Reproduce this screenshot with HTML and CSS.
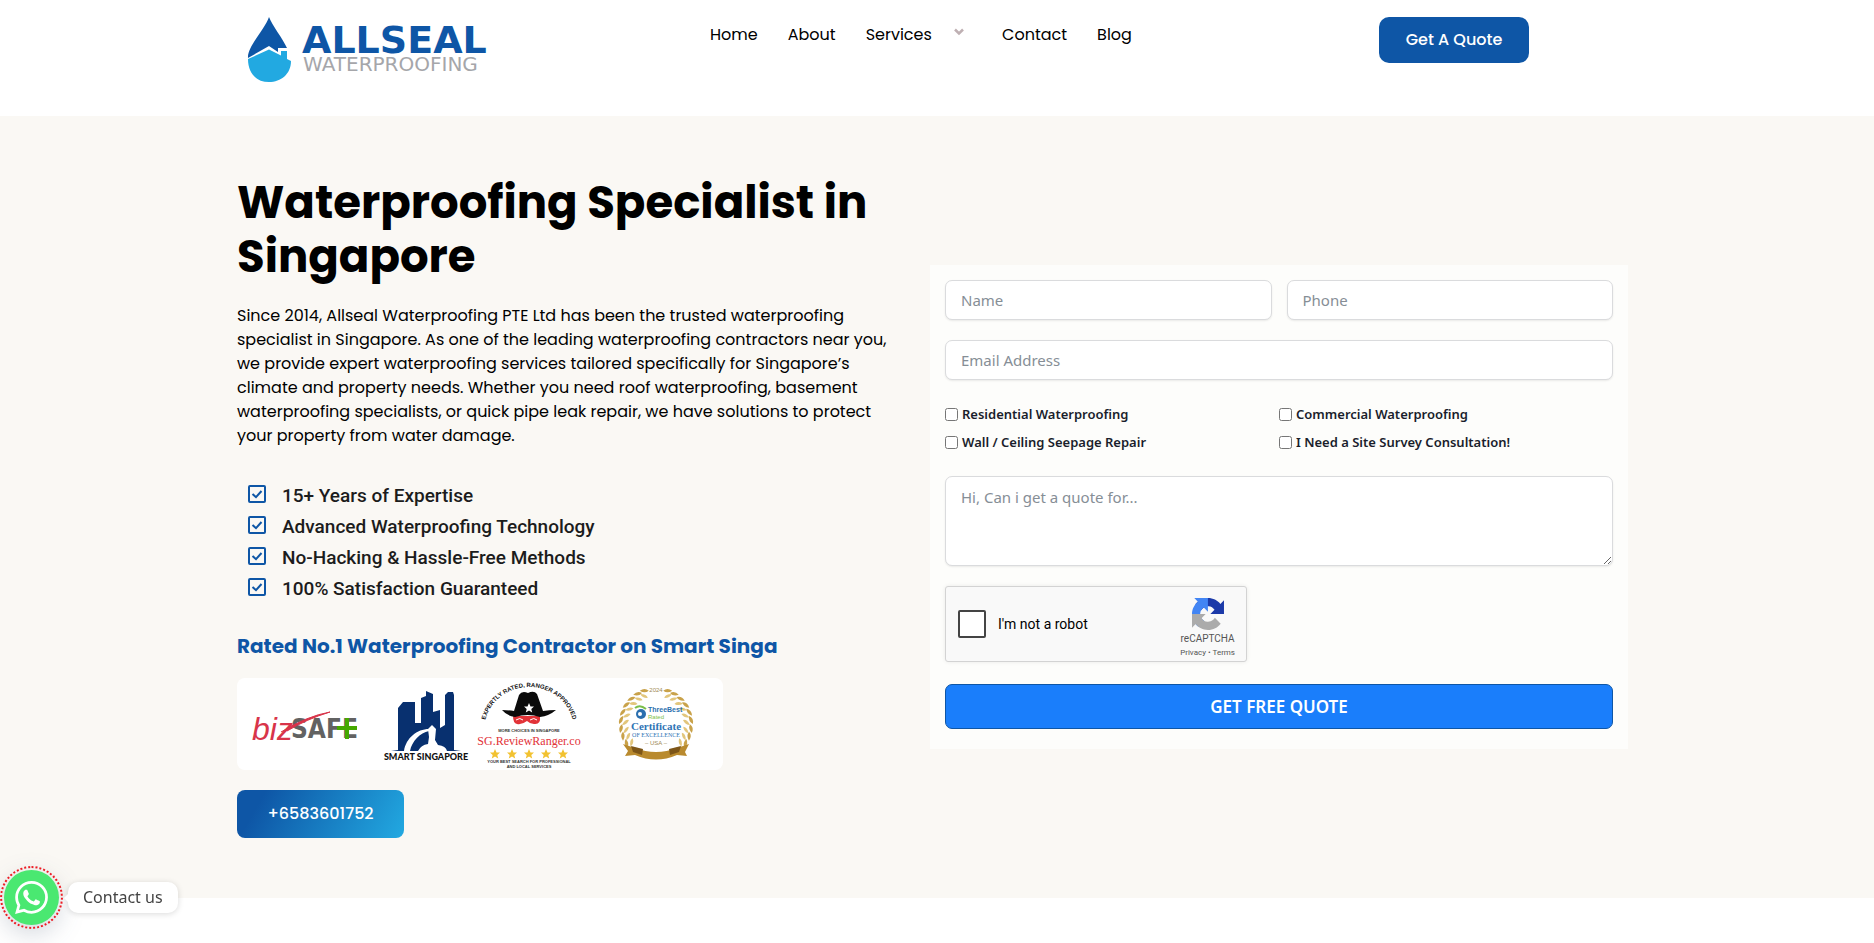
FILE: index.html
```html
<!DOCTYPE html>
<html lang="en">
<head>
    <meta charset="UTF-8">
    <meta name="viewport" content="width=device-width, initial-scale=1">
    <title>Allseal Waterproofing</title>
    <link rel="stylesheet" href="styles.css">
</head>
<body>
    <!-- header -->
    <header class="header">
        <div class="container header-inner">
            <a href="#" class="logo" aria-label="Allseal Waterproofing">
                <svg width="260" height="66" viewBox="0 0 260 66">
                    <path fill="#0e56a6" d="M22 0C25 8 36 22 40 31H31V35L22 29L1 41C0 30 18 12 22 0Z"/>
                    <path fill="#22a9e1" d="M1 42L22 32.500L34 38.500V34H40V42L44 44C44 57 34 65 22 65S1 57 1 42Z"/>
                    <text class="logo-name" x="55" y="36">ALLSEAL</text>
                    <text class="logo-sub" x="56" y="54">WATERPROOFING</text>
                </svg>
            </a>
            <nav class="nav">
                <a href="#">Home</a>
                <a href="#">About</a>
                <a href="#" class="has-menu">Services
                    <svg width="10" height="8" viewBox="0 0 10 8"><path d="M1 1.500L5 5.500L9 1.500" fill="none" stroke="#bfb0b3" stroke-width="2.500"/></svg>
                </a>
                <a href="#">Contact</a>
                <a href="#">Blog</a>
            </nav>
            <div>
                <a href="#" class="btn btn-quote">Get A Quote</a>
            </div>
        </div>
    </header>

    <!-- hero -->
    <section class="hero">
        <div class="container hero-inner">
            <div class="intro">
                <h1>Waterproofing Specialist in Singapore</h1>
                <p>Since 2014, Allseal Waterproofing PTE Ltd has been the trusted waterproofing specialist in Singapore. As one of the leading waterproofing contractors near you, we provide expert waterproofing services tailored specifically for Singapore’s climate and property needs. Whether you need roof waterproofing, basement waterproofing specialists, or quick pipe leak repair, we have solutions to protect your property from water damage.</p>
                <ul class="points">
                    <li><svg class="tick" viewBox="0 0 18 18"><rect x="1" y="1" width="16" height="16" rx="1"/><path d="M4.500 9L8 12.200L13.500 6"/></svg>15+ Years of Expertise</li>
                    <li><svg class="tick" viewBox="0 0 18 18"><rect x="1" y="1" width="16" height="16" rx="1"/><path d="M4.500 9L8 12.200L13.500 6"/></svg>Advanced Waterproofing Technology</li>
                    <li><svg class="tick" viewBox="0 0 18 18"><rect x="1" y="1" width="16" height="16" rx="1"/><path d="M4.500 9L8 12.200L13.500 6"/></svg>No-Hacking &amp; Hassle-Free Methods</li>
                    <li><svg class="tick" viewBox="0 0 18 18"><rect x="1" y="1" width="16" height="16" rx="1"/><path d="M4.500 9L8 12.200L13.500 6"/></svg>100% Satisfaction Guaranteed</li>
                </ul>
                <h2>Rated No.1 Waterproofing Contractor on Smart Singa</h2>
                <svg class="awards" width="486" height="92" viewBox="0 0 486 92">
                    <defs>
                        <path id="arc" d="M247 52A45 43 0 0 1 337 52"/>
                        <path id="star" d="M0 -5L1.500 -1.600L5 -1.400L2.300 .9L3.200 4.500L0 2.500L-3.200 4.500L-2.300 .9L-5 -1.400L-1.500 -1.600Z"/>
                        <g id="leaf"><path d="M-37 0Q-38 -6 -33 -8Q-32 -3 -37 0Z" fill="#c9a24a"/><path d="M-34 1Q-31 -5 -27 -4Q-29 1 -34 1Z" fill="#e2c67c"/></g>
                        <g id="branch">
                            <use href="#leaf" transform="rotate(-40)"/><use href="#leaf" transform="rotate(-27)"/>
                            <use href="#leaf" transform="rotate(-14)"/><use href="#leaf"/>
                            <use href="#leaf" transform="rotate(13)"/><use href="#leaf" transform="rotate(26)"/>
                            <use href="#leaf" transform="rotate(39)"/><use href="#leaf" transform="rotate(52)"/>
                            <use href="#leaf" transform="rotate(64)"/>
                        </g>
                    </defs>
                    <!-- bizSAFE -->
                    <text class="safe" x="54" y="60">SAFE</text>
                    <text class="biz" x="15" y="62">biz</text>
                    <path d="M44 54Q70 38 93 34Q70 41 50 53" fill="#d8344a" stroke="#d8344a" stroke-width="1"/>
                    <path d="M110 40V61M100 50H120" stroke="#45a800" stroke-width="4"/>
                    <!-- Smart Singapore -->
                    <path fill="#08306f" d="M161 72V30L166 24H178V45H184V20L189 18V13L196 16V34L203 32V50L208 47V17L211 14H216L217 17V72L224 73H154Z"/>
                    <path fill="#fff" d="M167 73C169 60 180 51 192 51V53C183 55 175 63 173 73ZM181 73Q184 67 191 66L192 59L191 51L195 47L199 51L198 62L201 67Q209 68 210 73Z"/>
                    <text class="smart" x="189" y="82">SMART SINGAPORE</text>
                    <!-- Review Ranger -->
                    <text class="arc"><textPath href="#arc" startOffset="50%">EXPERTLY RATED, RANGER APPROVED</textPath></text>
                    <path fill="#e23338" d="M276 38H303Q304 47 297 46Q293 46 290 43Q285 47 280 46Q276 45 276 38Z"/>
                    <path d="M279 42Q283 39 286 42M293 42Q297 39 300 42" fill="none" stroke="#fff" stroke-width="1"/>
                    <path fill="#0b0b0b" d="M265 32Q272 32 277 33L282 17Q285 12 291 15Q297 12 300 16L306 33Q312 32 319 32Q312 38 303 39Q291 35 278 39Q270 38 265 32Z"/>
                    <use href="#star" transform="translate(292 30)" fill="#fff"/>
                    <text class="tiny" x="292" y="54">MORE CHOICES IN SINGAPORE</text>
                    <text class="ranger" x="292" y="67">SG.ReviewRanger.co</text>
                    <g fill="#f2c230">
                        <use href="#star" x="258" y="76"/><use href="#star" x="275" y="76"/><use href="#star" x="292" y="76"/><use href="#star" x="309" y="76"/><use href="#star" x="326" y="76"/>
                    </g>
                    <text class="tiny" x="292" y="85">YOUR BEST SEARCH FOR PROFESSIONAL</text>
                    <text class="tiny" x="292" y="90">AND LOCAL SERVICES</text>
                    <!-- certificate -->
                    <use href="#branch" transform="translate(419 46)"/>
                    <use href="#branch" transform="translate(419 46) scale(-1 1)"/>
                    <path fill="#b98a2e" d="M386 66L398 70Q419 78 440 70L452 66L448 74L450 78L440 77Q419 86 398 77L388 78L391 73Z"/>
                    <path fill="#7d5618" d="M394 68L406 71L405 77L396 74ZM444 68L432 71L433 77L442 74Z"/>
                    <text class="year" x="419" y="14">2024</text>
                    <circle cx="404" cy="36" r="5" fill="#2b6fae"/><circle cx="403" cy="36" r="2" fill="#fff"/>
                    <path d="M398 30Q403 26 409 31" fill="none" stroke="#7bbf4a" stroke-width="2"/>
                    <text class="best" x="411" y="34">ThreeBest</text>
                    <text class="rated" x="411" y="41">Rated</text>
                    <text class="cert" x="419" y="52">Certificate</text>
                    <text class="excel" x="419" y="59">OF EXCELLENCE</text>
                    <text class="year" x="419" y="67">– USA –</text>
                </svg>
                <a href="tel:+6583601752" class="btn btn-phone">+6583601752</a>
            </div>

            <form class="quote-form">
                <div class="row">
                    <input class="field" type="text" aria-label="Name" placeholder="Name">
                    <input class="field" type="tel" aria-label="Phone" placeholder="Phone">
                </div>
                <input class="field" type="email" aria-label="Email Address" placeholder="Email Address">
                <div class="checks">
                    <label><input type="checkbox">Residential Waterproofing</label>
                    <label><input type="checkbox">Commercial Waterproofing</label>
                    <label><input type="checkbox">Wall / Ceiling Seepage Repair</label>
                    <label><input type="checkbox">I Need a Site Survey Consultation!</label>
                </div>
                <textarea class="field message" aria-label="Message" placeholder="Hi, Can i get a quote for..."></textarea>
                <div class="captcha">
                    <label class="robot"><input type="checkbox">I'm not a robot</label>
                    <div class="captcha-brand">
                        <svg width="32" height="32" viewBox="0 0 64 64">
                            <path fill="#1c3aa9" d="M64 31.955l-.033-1.370V4.687l-7.160 7.160C50.948 4.674 42.033.093 32.050.093c-10.400 0-19.622 4.960-25.458 12.640l11.736 11.860a15.550 15.550 0 0 1 4.754-5.334c2.050-1.600 4.952-2.906 8.968-2.906.485 0 .860.057 1.135.163 4.976.393 9.288 3.140 11.828 7.124l-8.307 8.307L64 31.953"/>
                            <path fill="#4285f4" d="M31.862.094l-1.370.033H4.594l7.160 7.160C4.580 13.147 0 22.060 0 32.046c0 10.400 4.960 19.622 12.640 25.458L24.500 45.768a15.550 15.550 0 0 1-5.334-4.754c-1.600-2.050-2.906-4.952-2.906-8.968 0-.485.057-.860.163-1.135.393-4.976 3.140-9.288 7.124-11.828l8.307 8.307L31.860.095"/>
                            <path fill="#ababab" d="M.001 32.045l.033 1.370v25.898l7.160-7.160c5.860 7.173 14.774 11.754 24.760 11.754 10.400 0 19.622-4.960 25.458-12.640l-11.736-11.860a15.550 15.550 0 0 1-4.754 5.334c-2.050 1.600-4.952 2.906-8.968 2.906-.485 0-.860-.057-1.135-.163-4.976-.393-9.288-3.140-11.828-7.124l8.307-8.307c-10.522.040-22.400.066-27.295-.005"/>
                        </svg>
                        <span class="captcha-name">reCAPTCHA</span>
                        <span class="captcha-links"><a href="#">Privacy</a> • <a href="#">Terms</a></span>
                    </div>
                </div>
                <button class="submit" type="submit">GET FREE QUOTE</button>
            </form>
        </div>
    </section>

    <!-- floating chat -->
    <div class="chat">
        <a href="#" class="chat-btn" aria-label="WhatsApp">
            <svg width="33" height="33" viewBox="0 0 24 24"><path fill="#fff" d="M17.472 14.382c-.297-.149-1.758-.867-2.030-.967-.273-.099-.471-.148-.670.150-.197.297-.767.966-.940 1.164-.173.199-.347.223-.644.075-.297-.150-1.255-.463-2.390-1.475-.883-.788-1.480-1.761-1.653-2.059-.173-.297-.018-.458.130-.606.134-.133.298-.347.446-.520.149-.174.198-.298.298-.497.099-.198.050-.371-.025-.520-.075-.149-.669-1.612-.916-2.207-.242-.579-.487-.500-.669-.510-.173-.008-.371-.010-.570-.010-.198 0-.520.074-.792.372-.272.297-1.040 1.016-1.040 2.479 0 1.462 1.065 2.875 1.213 3.074.149.198 2.096 3.200 5.077 4.487.709.306 1.262.489 1.694.625.712.227 1.360.195 1.871.118.571-.085 1.758-.719 2.006-1.413.248-.694.248-1.289.173-1.413-.074-.124-.272-.198-.570-.347m-5.421 7.403h-.004a9.870 9.870 0 0 1-5.031-1.378l-.361-.214-3.741.982.998-3.648-.235-.374a9.860 9.860 0 0 1-1.510-5.260c.001-5.450 4.436-9.884 9.888-9.884 2.640 0 5.122 1.030 6.988 2.898a9.825 9.825 0 0 1 2.893 6.994c-.003 5.450-4.437 9.884-9.885 9.884m8.413-18.297A11.815 11.815 0 0 0 12.050 0C5.495 0 .160 5.335.157 11.892c0 2.096.547 4.142 1.588 5.945L.057 24l6.305-1.654a11.882 11.882 0 0 0 5.683 1.448h.005c6.554 0 11.890-5.335 11.893-11.893a11.821 11.821 0 0 0-3.480-8.413Z"/></svg>
        </a>
        <span class="chat-label">Contact us</span>
    </div>
</body>
</html>
```
FILE: styles.css
```css
*{box-sizing:border-box;}
body{margin:0;background:#fff;color:#000;font-family:Poppins, Inter, sans-serif;font-size:16px;line-height:24px;}
a{text-decoration:none;color:inherit;}
h1, h2, p, ul{margin:0;padding:0;}
.container{max-width:1400px;margin:0 auto;}

/* header */
.header{background:#fff;}
.header-inner{display:grid;grid-template-columns:473fr 669fr 258fr;min-height:116px;padding-top:17px;align-items:start;}
.logo{display:block;padding-left:10px;height:66px;}
.logo-name{font:bold 38px "DejaVu Sans", sans-serif;fill:#0e56a6;}
.logo-sub{font:20px "DejaVu Sans", sans-serif;fill:#a5a6aa;}
.nav{display:flex;gap:30px;padding-top:6px;}
.has-menu svg{margin:0 8px 4px 18px;}
.btn{display:inline-block;border-radius:8px;color:#fff;font-weight:500;text-align:center;}
.btn-quote{width:150px;line-height:46px;background:#0e56a6;border-radius:10px;}

/* hero */
.hero{background:#faf8f4;padding:60px 0;}
.hero-inner{display:grid;grid-template-columns:658fr 698fr;gap:35px;align-items:center;padding-right:9px;}
h1{font-size:45px;line-height:54px;font-weight:700;margin-bottom:20px;}
.points{list-style:none;margin:32px 0 30px;padding-left:11px;font:500 19px/31px Roboto, sans-serif;color:#1c1c1c;}
.points li{display:flex;align-items:center;gap:16px;}
.tick{width:18px;height:18px;margin-bottom:4px;fill:none;stroke:#0e56a6;stroke-width:2;}
h2{font-size:20px;line-height:24px;font-weight:700;color:#0e56a6;}
.awards{display:block;max-width:100%;margin:20px 0;background:#fff;border-radius:8px;}
.btn-phone{width:167px;line-height:48px;background:linear-gradient(120deg, #0e56a6 15%, #22a9e1);}

/* text in the award badges */
.safe{font:bold 26px "DejaVu Sans Condensed", sans-serif;fill:#626262;}
.biz{font:italic 32px "Liberation Sans", sans-serif;fill:#d8344a;}
.smart, .arc, .ranger, .tiny, .year, .cert, .excel{text-anchor:middle;}
.smart{font:900 9px Lato, sans-serif;fill:#111;}
.arc{font:bold 6px "Liberation Sans", sans-serif;fill:#111;}
.ranger{font:12px "Liberation Serif", serif;fill:#e23338;}
.tiny{font:bold 4px "Liberation Sans", sans-serif;fill:#333;}
.year{font:6px "Liberation Sans", sans-serif;fill:#a08a55;}
.best{font:bold 7px "Liberation Sans", sans-serif;fill:#2b6fae;}
.rated{font:6px "Liberation Sans", sans-serif;fill:#7bbf4a;}
.cert{font:bold 11px "Liberation Serif", serif;fill:#2f74b5;}
.excel{font:6px "Liberation Serif", serif;fill:#2f74b5;}

/* quote form */
.quote-form{display:flex;flex-direction:column;gap:20px;padding:15px 15px 20px;background:#fdfdfb;font-family:"Segoe UI", "Noto Sans", sans-serif;}
.row{display:grid;grid-template-columns:1fr 1fr;gap:15px;}
.field{display:block;width:100%;height:40px;padding:0 15px;border:1px solid #dadbdd;border-radius:7px;background:#fff;box-shadow:0 1px 2px rgba(0,0,0,.08);font:15px/24px "Segoe UI", "Noto Sans", sans-serif;}
.field::placeholder{color:#868e96;opacity:1;}
.message{height:90px;padding-top:8px;resize:vertical;}
.checks{display:grid;grid-template-columns:1fr 1fr;row-gap:4px;padding:2px 0;font-size:13px;line-height:24px;font-weight:600;color:#1a1e2c;}
.checks label{display:flex;align-items:center;}
.checks input{width:13px;height:13px;margin:0 4px 0 0;}
.captcha{display:flex;justify-content:space-between;width:302px;height:76px;padding:0 11px 0 12px;border:1px solid #d3d3d3;border-radius:3px;background:#f9f9f9;box-shadow:0 0 4px rgba(0,0,0,.08);font-family:Roboto, sans-serif;}
.robot{display:flex;align-items:center;gap:12px;font-size:14px;}
.robot input{appearance:none;width:28px;height:28px;margin:0;border:2px solid #444;border-radius:2px;background:#fff;}
.captcha-brand{display:flex;flex-direction:column;align-items:center;padding-top:11px;color:#555;}
.captcha-name{font-size:10px;line-height:18px;}
.captcha-links{font-size:8px;line-height:10px;}
.submit{height:45px;margin-top:2px;border:1px solid #0e56a6;border-radius:7px;background:#1a7efb;color:#fff;font:600 17px "Segoe UI", "Noto Sans", sans-serif;}

/* floating chat */
.chat{position:fixed;left:0;bottom:14px;display:flex;align-items:center;gap:5px;}
.chat-btn{display:flex;align-items:center;justify-content:center;width:63px;height:63px;padding:2px;border:2px dotted #ed1c24;border-radius:50%;background:#4ae871 content-box;background-clip:content-box;filter:drop-shadow(0 8px 12px rgba(40,60,90,.2));}
.chat-label{position:relative;padding:0 15px;line-height:31px;border-radius:10px;background:#fff;box-shadow:0 1px 6px rgba(0,0,0,.15);color:#444;font-family:"Segoe UI", "Noto Sans", sans-serif;}
.chat-label::before{content:"";position:absolute;left:-4px;top:11px;border:5px solid transparent;border-left:0;border-right-color:#fff;}
```
